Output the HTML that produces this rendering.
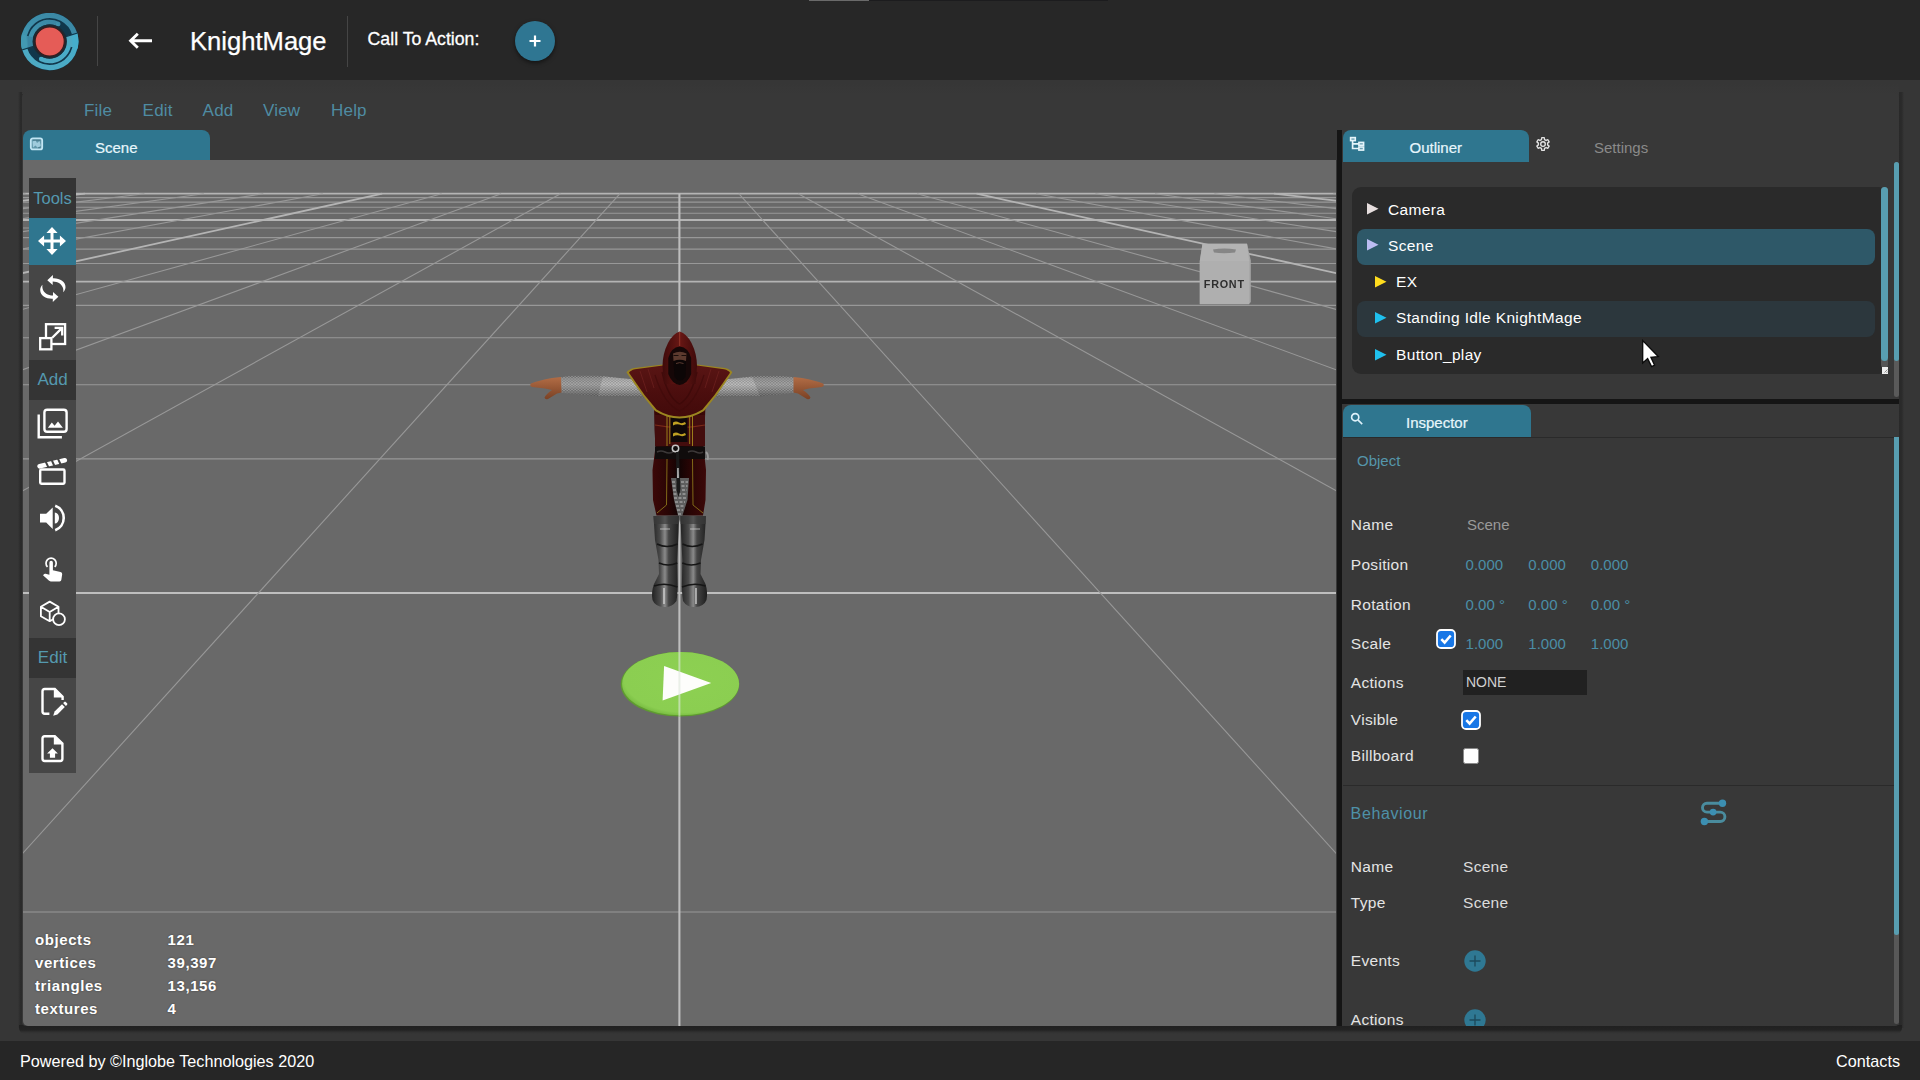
<!DOCTYPE html>
<html lang="en">
<head>
<meta charset="utf-8">
<title>KnightMage - Editor</title>
<style>
*{box-sizing:border-box;margin:0;padding:0}
html,body{width:1920px;height:1080px;overflow:hidden}
body{background:#363636;font-family:"Liberation Sans",sans-serif;color:#fff;position:relative}
.abs{position:absolute}
#hdr{left:0;top:0;width:1920px;height:80px;background:#272727}
#ftr{left:0;top:1041px;width:1920px;height:39px;background:#262626;font-size:16.200px;color:#fff}
#panel{left:22px;top:93px;width:1877px;height:933px;background:#383838;border-radius:4px;box-shadow:none}
.menu{top:100.700px;height:20px;font-size:17px;line-height:20px;color:#4f8ca3;letter-spacing:.2px}
.tab{background:#2f768f;border-radius:8px 8px 0 0;color:#e8f6fc;font-size:15px;text-align:center}
#vp{left:23px;top:160px;width:1313px;height:866px;background:#696969;overflow:hidden;border-radius:0 0 0 5px}
#tools{left:6px;top:18px;width:47px;height:594.600px;background:#464646}
.tl{left:0;width:47px;background:#343434;color:#5499af;font-size:17px;text-align:center}
.lbl{font-size:15.5px;color:#e4e4e4;letter-spacing:.3px;white-space:nowrap;line-height:18px}
.val{font-size:15px;color:#4b8ea6;white-space:nowrap;line-height:18px}
.row{left:1357px;width:518px;height:35px;border-radius:8px}
.rt{font-size:15.5px;color:#fff;letter-spacing:.35px;white-space:nowrap;line-height:18px}
.st{font-size:15px;font-weight:bold;color:#fff;white-space:nowrap;line-height:18px;letter-spacing:.58px;text-shadow:0 0 2px rgba(0,0,0,.45)}
</style>
</head>
<body>
<!-- HEADER -->
<div id="hdr" class="abs">
  <div class="abs" style="left:809px;top:0;width:60px;height:1px;background:#6a6a6a"></div>
  <div class="abs" style="left:869px;top:0;width:239px;height:1px;background:#1c1c1e"></div>
  <svg class="abs" style="left:21px;top:12.5px" width="58" height="58" viewBox="0 0 58 58"><defs><linearGradient id="lg1" x1="0" y1="1" x2="1" y2="0"><stop offset="0" stop-color="#4299b3"/><stop offset="1" stop-color="#3a85a2"/></linearGradient><linearGradient id="lg2" x1="0" y1="1" x2="1" y2="0"><stop offset="0" stop-color="#4fa9c2"/><stop offset="1" stop-color="#45aecb"/></linearGradient></defs><circle cx="28.7" cy="28.5" r="28.9" fill="#11374b"/><path d="M53.66 20.87A26.1 26.1 0 0 0 3.74 36.13" stroke="url(#lg1)" stroke-width="5.2" fill="none"/><path d="M37.25 10.97A19.5 19.5 0 0 0 10.05 34.20" stroke="url(#lg1)" stroke-width="4.6" fill="none"/><circle cx="37.25" cy="10.97" r="2.3" fill="url(#lg1)"/><path d="M6.48 22.96A22.9 22.9 0 0 0 6.80 35.20" stroke="url(#lg1)" stroke-width="11.6" fill="none"/><path d="M3.74 36.13A26.1 26.1 0 0 0 53.66 20.87" stroke="url(#lg2)" stroke-width="5.2" fill="none"/><path d="M20.15 46.03A19.5 19.5 0 0 0 47.35 22.80" stroke="url(#lg2)" stroke-width="4.6" fill="none"/><circle cx="20.15" cy="46.03" r="2.3" fill="url(#lg2)"/><path d="M50.92 34.04A22.9 22.9 0 0 0 50.60 21.80" stroke="url(#lg2)" stroke-width="11.6" fill="none"/><path d="M0.78 37.04L13.40 33.18M44.00 23.82L56.62 19.96" stroke="#11374b" stroke-width="1.2"/><circle cx="28.7" cy="28.5" r="17.1" fill="#1c2a33"/><circle cx="28.7" cy="28.5" r="14.6" fill="#e55c57" stroke="#3a1c1e" stroke-width="1.2"/></svg>
  <div class="abs" style="left:97px;top:16px;width:1px;height:50px;background:#454545"></div>
  <svg class="abs" style="left:126px;top:28px" width="30" height="26" viewBox="0 0 30 26"><path d="M26 12.800H5M11.800 5.800L4.600 12.800l7.200 7" fill="none" stroke="#fff" stroke-width="2.900"/></svg>
  <div class="abs" style="left:190px;top:25px;font-size:25.6px;line-height:32px;color:#fff;white-space:nowrap;-webkit-text-stroke:.25px #fff">KnightMage</div>
  <div class="abs" style="left:347px;top:16px;width:1px;height:51px;background:#454545"></div>
  <div class="abs" style="left:367.600px;top:27.800px;font-size:17.700px;line-height:22px;color:#fff;white-space:nowrap;-webkit-text-stroke:.3px #fff">Call To Action:</div>
  <div class="abs" style="left:515px;top:21px;width:40px;height:40px;border-radius:50%;background:#2f7692;box-shadow:0 2px 4px rgba(0,0,0,.5)"></div>
  <svg class="abs" style="left:527px;top:33px" width="16" height="16" viewBox="0 0 16 16"><path d="M8 2.5v11M2.5 8h11" stroke="#fff" stroke-width="2.2" fill="none"/></svg>
</div>

<!-- EDITOR PANEL -->
<div class="abs" style="left:17.500px;top:92px;width:5px;height:936px;background:linear-gradient(to right,rgba(42,42,42,0),#2b2b2b 45%,#292929)"></div>
<div class="abs" style="left:1899px;top:92px;width:4.500px;height:936px;background:linear-gradient(to left,rgba(42,42,42,0),#2b2b2b 45%,#292929)"></div>
<div class="abs" style="left:19px;top:1025px;width:1883px;height:9px;border-radius:0 0 6px 6px;background:linear-gradient(to bottom,#202020,#232323 55%,rgba(46,46,46,.6) 80%,rgba(54,54,54,0))"></div>
<div class="abs" style="left:22px;top:84px;width:1877px;height:10px;background:linear-gradient(to bottom,rgba(56,56,56,0),#383838)"></div>
<div id="panel" class="abs"></div>
<div class="abs menu" style="left:84px">File</div>
<div class="abs menu" style="left:142.600px">Edit</div>
<div class="abs menu" style="left:202.600px">Add</div>
<div class="abs menu" style="left:263px">View</div>
<div class="abs menu" style="left:331px">Help</div>

<!-- scene tab -->
<div class="abs tab" style="left:23px;top:130px;width:187px;height:30px;line-height:34px"><span style="position:absolute;left:72px;top:.7px;-webkit-text-stroke:.2px #e8f6fc">Scene</span></div>
<svg class="abs" style="left:29px;top:136px" width="16" height="16" viewBox="0 0 16 16"><rect x="1.800" y="2.300" width="11.400" height="11.100" rx="2" fill="#5f97aa" stroke="#c2e6f4" stroke-width="1.800"/><path d="M3.500 5.500L6.500 4.200L8 7L10.500 5L11.800 9.500L9 12L6.500 9.500L4 11.500Z" fill="#b4dcec" opacity=".75"/><path d="M4.200 4.200h7.200M8.800 11.700h2.600" stroke="#3f6f80" stroke-width="1" opacity=".8"/></svg>


<!-- VIEWPORT -->
<div id="vp" class="abs">
<svg class="abs" style="left:0;top:0" width="1313" height="866" viewBox="0 0 1313 866"><style>.a{stroke:#989898;stroke-width:1.1;fill:none}.b{stroke:#b4b4b4;stroke-width:1.8;fill:none}.c{stroke:#bebebe;stroke-width:2.1;fill:none}</style><path class="b" d="M-5.0 33.7L1318.0 33.7"/><path class="a" d="M-5.0 37.6L1318.0 37.6"/><path class="a" d="M-5.0 42.1L1318.0 42.1"/><path class="a" d="M-5.0 47.3L1318.0 47.3"/><path class="a" d="M-5.0 53.2L1318.0 53.2"/><path class="b" d="M-5.0 60.0L1318.0 60.0"/><path class="a" d="M-5.0 68.0L1318.0 68.0"/><path class="a" d="M-5.0 77.6L1318.0 77.6"/><path class="a" d="M-5.0 89.1L1318.0 89.1"/><path class="a" d="M-5.0 103.5L1318.0 103.5"/><path class="b" d="M-5.0 121.6L1318.0 121.6"/><path class="a" d="M-5.0 145.4L1318.0 145.4"/><path class="a" d="M-5.0 177.8L1318.0 177.8"/><path class="a" d="M-5.0 224.8L1318.0 224.8"/><path class="a" d="M-5.0 298.9L1318.0 298.9"/><path class="c" d="M-5.0 433.0L1318.0 433.0"/><path class="a" d="M-5.0 752.0L1318.0 752.0"/><path class="b" d="M-235.3 33.7L-11607.2 871.0"/><path class="a" d="M-175.9 33.7L-10789.7 871.0"/><path class="a" d="M-116.4 33.7L-9972.1 871.0"/><path class="a" d="M-57.0 33.7L-9154.5 871.0"/><path class="a" d="M2.5 33.7L-8336.9 871.0"/><path class="b" d="M61.9 33.7L-7519.4 871.0"/><path class="a" d="M121.4 33.7L-6701.8 871.0"/><path class="a" d="M180.8 33.7L-5884.2 871.0"/><path class="a" d="M240.3 33.7L-5066.6 871.0"/><path class="a" d="M299.7 33.7L-4249.1 871.0"/><path class="b" d="M359.2 33.7L-3431.5 871.0"/><path class="a" d="M418.6 33.7L-2613.9 871.0"/><path class="a" d="M478.1 33.7L-1796.3 871.0"/><path class="a" d="M537.5 33.7L-978.8 871.0"/><path class="a" d="M597.0 33.7L-161.2 871.0"/><path class="c" d="M656.4 33.7L656.4 871.0"/><path class="a" d="M715.8 33.7L1474.0 871.0"/><path class="a" d="M775.3 33.7L2291.6 871.0"/><path class="a" d="M834.7 33.7L3109.1 871.0"/><path class="a" d="M894.2 33.7L3926.7 871.0"/><path class="b" d="M953.6 33.7L4744.3 871.0"/><path class="a" d="M1013.1 33.7L5561.9 871.0"/><path class="a" d="M1072.5 33.7L6379.4 871.0"/><path class="a" d="M1132.0 33.7L7197.0 871.0"/><path class="a" d="M1191.4 33.7L8014.6 871.0"/><path class="b" d="M1250.9 33.7L8832.2 871.0"/><path class="a" d="M1310.3 33.7L9649.7 871.0"/><path class="a" d="M1369.8 33.7L10467.3 871.0"/><path class="a" d="M1429.2 33.7L11284.9 871.0"/><path class="a" d="M1488.7 33.7L12102.5 871.0"/><path class="b" d="M1548.1 33.7L12920.0 871.0"/></svg>
<svg class="abs" style="left:497px;top:165px" width="320" height="290" viewBox="520 325 320 290">
<defs>
<linearGradient id="gm" x1="0" y1="0" x2="0" y2="1"><stop offset="0" stop-color="#707070"/><stop offset=".14" stop-color="#a2a2a2"/><stop offset=".42" stop-color="#b6b6b6"/><stop offset=".72" stop-color="#8a8a8a"/><stop offset="1" stop-color="#565656"/></linearGradient>
<pattern id="pm" width="3.2" height="2.6" patternUnits="userSpaceOnUse"><circle cx=".8" cy=".7" r=".7" fill="#e8e8e8"/><circle cx="2.4" cy="2" r=".7" fill="#e4e4e4"/><circle cx="2.4" cy=".7" r=".7" fill="#4c4c4c"/><circle cx=".8" cy="2" r=".7" fill="#505050"/></pattern>
<linearGradient id="gsk" x1="0" y1="0" x2="0" y2="1"><stop offset="0" stop-color="#b26d46"/><stop offset="1" stop-color="#7a4124"/></linearGradient>
<linearGradient id="gco" x1="0" y1="0" x2="0" y2="1"><stop offset="0" stop-color="#591514"/><stop offset=".5" stop-color="#4c0e0e"/><stop offset="1" stop-color="#420a0a"/></linearGradient>
<linearGradient id="gho" x1="0" y1="0" x2="1" y2="0"><stop offset="0" stop-color="#3e0a0a"/><stop offset=".5" stop-color="#681714"/><stop offset="1" stop-color="#3e0a0a"/></linearGradient>
<linearGradient id="gbt" x1="0" y1="0" x2="1" y2="0"><stop offset="0" stop-color="#222"/><stop offset=".3" stop-color="#4a4a4a"/><stop offset=".48" stop-color="#8a8a8a"/><stop offset=".62" stop-color="#454545"/><stop offset="1" stop-color="#1e1e1e"/></linearGradient>
<linearGradient id="gsk2" x1="0" y1="0" x2="1" y2="0"><stop offset="0" stop-color="#3c0808"/><stop offset=".28" stop-color="#2a0505"/><stop offset=".5" stop-color="#120404"/><stop offset=".72" stop-color="#2a0505"/><stop offset="1" stop-color="#3c0808"/></linearGradient>
</defs>
<!-- arms -->
<path d="M560.500 377.200Q585 373.500 603 376.300Q622 378.500 640 380L646 397.500Q620 397 598 396.300Q578 394.500 560.800 392.700Z" fill="url(#gm)"/>
<path d="M560.500 377.200Q585 373.500 603 376.300Q622 378.500 640 380L646 397.500Q620 397 598 396.300Q578 394.500 560.800 392.700Z" fill="url(#pm)" opacity=".42"/>
<path d="M794 377.200Q770 374 752 376.500Q734 378.500 718 380L712 397.500Q738 397 760 396.300Q780 394.500 794 392.700Z" fill="url(#gm)"/>
<path d="M794 377.200Q770 374 752 376.500Q734 378.500 718 380L712 397.500Q738 397 760 396.300Q780 394.500 794 392.700Z" fill="url(#pm)" opacity=".42"/>
<path d="M560.500 377.200Q585 373.500 603 376.300L598 396.300Q578 394.500 560.800 392.700Z" fill="#000" opacity=".12"/><path d="M794 377.200Q770 374 752 376.500L760 396.300Q780 394.500 794 392.700Z" fill="#000" opacity=".12"/>
<!-- hands -->
<path d="M561 377L552 378Q538 380.500 531 383.500Q529 385.500 532 387L545 388.500L552 390Q546 394 544.500 397.500Q545 400 548 399Q553 396 557 393.500L561.500 392.500Z" fill="url(#gsk)"/>
<path d="M793.500 377L802 378Q816 380.500 823 383.500Q825 385.500 822 387L809 388.500L803 390Q809 394 810.500 397.500Q810 400 807 399Q802 396 798 393.500L793.500 392.500Z" fill="url(#gsk)"/>
<!-- torso -->
<path d="M654 405L705.500 405L704.500 430L703.500 447L706 470L705.500 500L703 515.500L656.500 515.500L653 500L652.500 470L655.500 447L654.500 430Z" fill="url(#gsk2)"/>
<path d="M655 415H705V446H655Z" fill="#430d0d"/>
<path d="M655 425Q680 430 705 425" fill="none" stroke="#7a2a18" stroke-width="1.200"/>
<path d="M670.500 415H687.500V442H670.500Z" fill="#0e0808"/>
<path d="M667 412V446M692.500 412V446M669.800 414V444M689.700 414V444" stroke="#a58a1c" stroke-width=".9" fill="none"/>
<path d="M673 422.500q3-2 6 0q3 1.500 6-.5l1 2q-3 2-6.500 .5q-3-1-6.500 1zM673 433.500q3-2 6 0q3 1.500 6-.5l1 2q-3 2-6.500 .5q-3-1-6.500 1z" fill="#bfa022"/>
<!-- belt -->
<path d="M655 446.500H705V459H655Z" fill="#100c0c"/>
<path d="M657 452q4-2 8 0t8 0M688 452q4-2 8 0t7 0" stroke="#3c3838" stroke-width="1.600" fill="none"/>
<circle cx="675.500" cy="448.500" r="3.200" fill="none" stroke="#c4c4c4" stroke-width="1.500"/>
<path d="M706 452q3 3 1.500 8" stroke="#9a9a9a" stroke-width="1.800" fill="none"/>
<!-- skirt details -->
<path d="M667 459L666.500 505L657 513M692.500 459L693 505L703 513" stroke="#8a741a" stroke-width=".9" fill="none"/>
<path d="M671 478L689 478L687.500 500L680 523L674 500Z" fill="#5e5e5e"/>
<path d="M672 482h16M672.500 486h15M673 490h14M673.500 494h13M674 498h12M675 502h10M676 506h8M677 510h6M678 514h4" stroke="#bdbdbd" stroke-width="1" stroke-dasharray="3 1.500"/>
<path d="M676 452L679 452L680.500 490L678.500 497L676.500 490Z" fill="#1a1a1a"/>
<path d="M677.300 468L678.600 468L678.800 478L677.200 478Z" fill="#d0d0d0"/>
<!-- cowl -->
<path d="M626.500 372.500Q628 369.500 634 368L663 364.500L697 364.500L725 368Q731 369.500 732.300 372.500L716 396L704 411Q692 418.500 679.500 418.500Q667 418.500 655 411L643 396Z" fill="#9c8620"/>
<path d="M629 372.800Q630.500 370.300 635 369.300L663 365.500L697 365.500L724 369.300Q728.500 370.300 730 372.800L714.500 395L702.500 409.500Q691 416.500 679.500 416.500Q668 416.500 656.500 409.500L644.500 395Z" fill="url(#gco)"/>
<path d="M662 372Q668 398 679.500 404Q691 398 697 372" fill="none" stroke="#3c0909" stroke-width="1.400" opacity=".8"/>
<path d="M655 375Q664 404 679.500 411Q695 404 704 375" fill="none" stroke="#3e0a0a" stroke-width="1.200" opacity=".7"/>
<path d="M640 371L647 392M719 371L712 392M648 369L654 388M711 369L705 388" stroke="#6f2220" stroke-width="1" opacity=".7"/>
<!-- hood -->
<path d="M679.700 331.500Q673 333.500 668 343Q662.500 354 662.500 366L664 384L695.500 384L697 366Q697 354 691.500 343Q686.500 333.500 679.700 331.500Z" fill="url(#gho)"/>
<path d="M679.700 332V346" stroke="#a04030" stroke-width=".8"/>
<!-- face opening -->
<path d="M679.700 346.500Q671 347.500 668.300 358L668.300 374Q672 384 679.700 385Q687.500 384 691.200 374L691.200 358Q688.500 347.500 679.700 346.500Z" fill="#150707"/>
<path d="M673 353.500Q679.700 350 686.500 353.500L686 361L673.500 361Z" fill="#5c3a2e"/>
<path d="M673.500 355.500h5M681.500 355.500h5" stroke="#1a0d0a" stroke-width="1.200"/>
<path d="M673.500 361Q679.700 358.500 686 361L685.500 377Q680 384 674.500 377Z" fill="#0c0606"/>
<path d="M676 363.500Q679.700 361.800 683.500 363.500" stroke="#5a3a30" stroke-width="1" fill="none"/>
<!-- boots -->
<path d="M653.500 516L679 516L678.500 532L677.200 560L677.500 578Q678 592 676.500 601Q672 607.500 664 607Q655 606.500 652.500 600Q651 592 654 584L659 574L658.500 560L655 540Z" fill="url(#gbt)"/>
<path d="M680.500 516L706 516L704.500 540L701 560L700.500 574L705.500 584Q708 592 706.500 600Q704 606.500 695 607Q687 607.500 683 601Q681.500 592 682 578L682.300 560L681 532Z" fill="url(#gbt)"/>
<path d="M653.500 516H679V524H654ZM680.500 516H706V524H680.500Z" fill="#3a3a3a" opacity=".7"/>
<path d="M657 544Q667 549 677.500 544M682.500 544Q692 549 702.500 544M659 563Q668 567 677.300 563M682.300 563Q691 567 700.500 563M654 586Q665 582 677.500 587M682 587Q694 582 705.500 586" stroke="#161616" stroke-width="1.600" fill="none"/>
<path d="M664 588V604M696 588V604" stroke="#e0e0e0" stroke-width="1.400" opacity=".85"/>
<path d="M660 529h10M690 529h10" stroke="#c8c8c8" stroke-width="1.200" opacity=".8"/>
</svg>

<svg class="abs" style="left:587px;top:480px" width="140" height="90" viewBox="610 640 140 90">
<defs><radialGradient id="gpl" cx=".55" cy=".42" r=".62"><stop offset="0" stop-color="#8dd052"/><stop offset=".86" stop-color="#8bce51"/><stop offset=".96" stop-color="#79bd42"/><stop offset="1" stop-color="#62a230"/></radialGradient><clipPath id="cpl"><ellipse cx="680" cy="684.300" rx="59.300" ry="32.300"/></clipPath></defs>
<ellipse cx="680" cy="684.300" rx="59.300" ry="32.300" fill="#5f9c30"/>
<ellipse cx="680.600" cy="683.700" rx="58.500" ry="31.600" fill="url(#gpl)"/>
<path d="M664.100 666L711.200 683L662.600 700.600Z" fill="#fdfdfb"/>
<path d="M679.400 640V730" stroke="#dfe8dc" stroke-width="2" opacity=".62" clip-path="url(#cpl)"/>
</svg>

<svg class="abs" style="left:1167px;top:75px" width="80" height="80" viewBox="1190 235 80 80">
<defs><filter id="bl"><feGaussianBlur stdDeviation=".45"/></filter><filter id="bl2"><feGaussianBlur stdDeviation=".7"/></filter></defs>
<g filter="url(#bl)">
<path d="M1202.500 243.800H1247L1250.800 260.500L1250.800 302L1249 304H1199.800V261Z" fill="#a6a6a6"/>
<path d="M1202.500 243.800H1247L1249.200 261H1199.800Z" fill="#b3b3b3"/>
<path d="M1199.800 261H1249.200V304.200H1199.800Z" fill="#afafaf"/>
</g>
<path d="M1213 249.500Q1224 247.500 1236 249.500L1235 252.500Q1224 254 1214 252.500Z" fill="#777" filter="url(#bl2)" opacity=".75"/>
<text x="1224.300" y="287.600" text-anchor="middle" font-family="Liberation Sans, sans-serif" font-weight="bold" font-size="10.800" letter-spacing=".75" fill="#2e2e2e" filter="url(#bl)">FRONT</text>
</svg>

  <div id="tools" class="abs">
    <div class="abs tl" style="top:0;height:40px;line-height:41px;font-size:16.500px">Tools</div>
    <div class="abs" style="left:0;top:40px;width:47px;height:47px;background:#2f768f"></div>
    <div class="abs tl" style="top:182px;height:39.500px;line-height:40px">Add</div>
    <div class="abs tl" style="top:460px;height:40px;line-height:40px">Edit</div>
<svg class="abs" style="left:9.200px;top:49.400px" width="28" height="28" viewBox="0 0 28 28"><path fill="#fff" d="M14 0L19.600 6.100H15.500V12.500H21.900V8.400L28 14L21.900 19.600V15.500H15.500V21.900H19.600L14 28L8.400 21.900H12.500V15.500H6.100V19.600L0 14L6.100 8.400V12.500H12.500V6.100H8.400Z"/></svg>
<svg class="abs" style="left:10.600px;top:97px" width="28" height="28" viewBox="0 0 28 28"><g fill="#fff"><path d="M7.300 5.300L12.900 0.100L12.900 3.300C19.600 3 25.700 6.500 25.500 12.300C25.400 14.500 24.500 16 23.200 17.300C23.500 15.600 23.400 14.200 23 13C21.800 9 18 6.500 12.700 6.400L12.700 9.900Z"/><path d="M7.300 5.300L12.900 0.100L12.900 3.300C19.600 3 25.700 6.500 25.500 12.300C25.400 14.500 24.500 16 23.200 17.300C23.500 15.600 23.400 14.200 23 13C21.800 9 18 6.500 12.700 6.400L12.700 9.900Z" transform="rotate(180 12.850 13.500)"/></g></svg>
<svg class="abs" style="left:10px;top:144.600px" width="29" height="29" viewBox="0 0 29 29"><g fill="none" stroke="#fff" stroke-width="2.300"><rect x="7" y="1.200" width="19.100" height="19.800"/><path d="M13.200 14.800L22.400 5.600M15.600 4.800H23.200V12.400"/><rect x="1.200" y="15.100" width="11.200" height="11.200" fill="#444"/></g></svg>
<svg class="abs" style="left:8px;top:230px" width="32" height="32" viewBox="0 0 32 32"><g fill="none" stroke="#fff" stroke-width="2.400"><path d="M1.700 6.500V29.200H24.900"/><rect x="7.400" y="1.700" width="22.200" height="22" rx="2.800"/></g><path fill="#fff" d="M10.900 19.700L14.800 14.600L17.600 17.700L21 13.400L25.900 19.700Z"/></svg>
<svg class="abs" style="left:8px;top:277px" width="32" height="32" viewBox="0 0 32 32"><rect x="3.200" y="14.500" width="24.300" height="14.300" rx="1.200" fill="none" stroke="#fff" stroke-width="2.400"/><path d="M2.600 11.300L27.800 5.300" stroke="#fff" stroke-width="4.600" stroke-linecap="round"/><path d="M8.600 6.300L11.400 12.400M14.600 4.900L17.400 11M20.800 3.400L23.600 9.500" stroke="#444" stroke-width="2"/></svg>
<svg class="abs" style="left:9px;top:326px" width="30" height="30" viewBox="0 0 30 30"><path fill="#fff" d="M2 9.700H8.200L14.700 3.500V25L8.200 18.500H2Z"/><path fill="#fff" d="M16.800 8.400A4.200 5.600 0 0 1 16.800 19.600Z"/><path d="M17.200 1.800A13 13 0 0 1 17.200 26.200" fill="none" stroke="#fff" stroke-width="2.600"/></svg>
<svg class="abs" style="left:9px;top:377px" width="30" height="30" viewBox="0 0 30 30"><path d="M9.500 11.800A5.100 5.100 0 1 1 16.700 11.800" fill="none" stroke="#fff" stroke-width="1.700"/><path fill="#fff" d="M11.400 7.600a1.750 1.750 0 0 1 3.500 0V15.300L22.500 16.900Q24.400 17.400 24.200 19.200L23.300 25Q23 26.400 21.600 26.400H12.700Q11.600 26.400 10.800 25.600L5 20.200L6.200 19Q6.800 18.500 7.600 18.700L11.400 19.700Z"/></svg>
<svg class="abs" style="left:9px;top:421px" width="32" height="32" viewBox="0 0 32 32"><g fill="none" stroke="#fff" stroke-width="1.800" stroke-linejoin="round"><path d="M11.700 2.600L20.500 7.700V17.300L11.700 22.200L2.900 17.300V7.700ZM2.900 7.700L11.700 12.900L20.500 7.700M11.700 12.900V22.200"/><circle cx="21" cy="20.200" r="5.900" fill="#444"/></g></svg>
<svg class="abs" style="left:9px;top:508px" width="30" height="32" viewBox="0 0 30 32"><path d="M11.400 27.700H6.700Q4.500 27.700 4.500 25.500V5.200Q4.500 3 6.700 3H16.800L24.600 10.800V14" fill="none" stroke="#fff" stroke-width="2.400"/><path fill="#fff" d="M15.800 2.400L25.400 11.600H15.800Z"/><path d="M15.200 29.800L16.600 25.600L24 18.200L26.800 21L19.400 28.400Z" fill="#fff"/><path d="M25.100 17.100L26.300 15.900Q27 15.300 27.700 15.900L29.100 17.300Q29.700 18 29.100 18.700L27.900 19.900Z" fill="#fff"/></svg>
<svg class="abs" style="left:9px;top:555px" width="30" height="32" viewBox="0 0 30 32"><path d="M6.700 3.200H16.800L24.400 10.600V25.800Q24.400 28 22.200 28H6.700Q4.500 28 4.500 25.800V5.400Q4.500 3.200 6.700 3.200Z" fill="none" stroke="#fff" stroke-width="2.400"/><path fill="#fff" d="M15.800 2.600L25 11.400H15.800Z"/><path fill="#fff" d="M14.500 15.200L19.900 20.600H17.100V24.700H11.900V20.600H9.100Z"/></svg>

  </div>
  <div class="abs st" style="left:12px;top:771px">objects</div><div class="abs st" style="left:144.600px;top:771px">121</div>
  <div class="abs st" style="left:12px;top:794px">vertices</div><div class="abs st" style="left:144.600px;top:794px">39,397</div>
  <div class="abs st" style="left:12px;top:817px">triangles</div><div class="abs st" style="left:144.600px;top:817px">13,156</div>
  <div class="abs st" style="left:12px;top:840px">textures</div><div class="abs st" style="left:144.600px;top:840px">4</div>
</div>

<!-- dividers -->
<div class="abs" style="left:1337px;top:130px;width:5px;height:896px;background:#151515"></div>
<div class="abs" style="left:1342px;top:399px;width:1557px;height:5px;background:#151515;width:557px"></div>

<!-- OUTLINER -->
<div class="abs tab" style="left:1343px;top:130px;width:186px;height:32px;line-height:35px"><span style="position:absolute;left:66.500px;top:0;-webkit-text-stroke:.2px #e8f6fc">Outliner</span></div>
<svg class="abs" style="left:1349px;top:136px" width="16" height="16" viewBox="0 0 16 16" fill="rgba(223,241,248,.35)" stroke="#e4f4fa" stroke-width="1.600"><rect x="1.600" y="1.600" width="4.700" height="3"/><rect x="9.900" y="6.400" width="4.700" height="2.900"/><rect x="9.900" y="11" width="4.700" height="3.100"/><path d="M3.600 4.600V12.500H9.900M3.600 7.800H9.900" fill="none" stroke-width="1.700"/></svg>
<svg class="abs" style="left:1534.600px;top:136.100px" width="16" height="16" viewBox="0 0 16 16" fill="none" stroke="#e2e2e2" stroke-width="1.350" stroke-linejoin="round"><path d="M9.53 3.56L9.24 1.62L6.76 1.62L6.47 3.56L4.92 4.45L3.09 3.74L1.85 5.88L3.39 7.10L3.39 8.90L1.85 10.12L3.09 12.26L4.92 11.55L6.47 12.44L6.76 14.38L9.24 14.38L9.53 12.44L11.08 11.55L12.91 12.26L14.15 10.12L12.61 8.90L12.61 7.10L14.15 5.88L12.91 3.74L11.08 4.45Z"/><circle cx="8" cy="8" r="2.300"/></svg>
<div class="abs" style="left:1594px;top:139px;font-size:15px;line-height:18px;color:#8a8a8a;white-space:nowrap">Settings</div>
<!-- outer scrollbar -->
<div class="abs" style="left:1894px;top:162px;width:5px;height:235px;background:#5a5a5a;border-radius:3px"></div>
<div class="abs" style="left:1894px;top:162px;width:5px;height:199px;background:#589eb1;border-radius:3px"></div>
<!-- list -->
<div class="abs" style="left:1352px;top:187px;width:536px;height:187px;background:#2a2a2a;border-radius:9px"></div>
<div class="abs row" style="top:229.200px;height:35.500px;background:#2e5868"></div>
<div class="abs row" style="top:301.300px;height:35.300px;background:#2c373d"></div>
<div class="abs" style="left:1881px;top:187px;width:7px;height:181px;background:#555;border-radius:4px"></div>
<div class="abs" style="left:1881px;top:187px;width:7px;height:174px;background:#589eb1;border-radius:4px"></div>
<div class="abs" style="left:1881.500px;top:367.300px;width:6.400px;height:6.400px;background:#eee"></div><svg class="abs" style="left:1881.500px;top:367.300px" width="7" height="7"><path d="M2.500 5.500L5.500 2.500M4.500 5.800L5.800 4.500" stroke="#666" stroke-width=".7"/></svg>
<svg class="abs" style="left:1367px;top:203px" width="12" height="12"><path d="M0 0L11.500 5.700L0 11.400z" fill="#e6dede"/></svg>
<div class="abs rt" style="left:1388px;top:200.600px">Camera</div>
<svg class="abs" style="left:1367px;top:239px" width="12" height="12"><path d="M0 0L11.500 5.700L0 11.400z" fill="#bcbcf2"/></svg>
<div class="abs rt" style="left:1388px;top:236.600px">Scene</div>
<svg class="abs" style="left:1374.600px;top:275.500px" width="12" height="12"><path d="M0 0L11.500 5.700L0 11.400z" fill="#ffdc1e"/></svg>
<div class="abs rt" style="left:1396px;top:272.600px">EX</div>
<svg class="abs" style="left:1374.600px;top:312px" width="12" height="12"><path d="M0 0L11.500 5.700L0 11.400z" fill="#1fc0ee"/></svg>
<div class="abs rt" style="left:1396px;top:308.800px">Standing Idle KnightMage</div>
<svg class="abs" style="left:1374.600px;top:348.500px" width="12" height="12"><path d="M0 0L11.500 5.700L0 11.400z" fill="#1fc0ee"/></svg>
<div class="abs rt" style="left:1396px;top:346.100px">Button_play</div>

<!-- INSPECTOR -->
<div class="abs tab" style="left:1343px;top:405px;width:188px;height:32px;line-height:35px"><span style="position:absolute;left:63px;top:0;-webkit-text-stroke:.2px #e8f6fc">Inspector</span></div>
<svg class="abs" style="left:1350.300px;top:411.800px" width="14" height="14" viewBox="0 0 14 14" fill="none" stroke="#dcf0f9" stroke-width="1.650"><circle cx="5.200" cy="5.200" r="3.600"/><path d="M7.900 7.900l4.300 4.300"/></svg>
<div class="abs" style="left:1343px;top:437px;width:551px;height:1px;background:#2a2a2a"></div>
<div class="abs" style="left:1894px;top:437px;width:5px;height:587px;background:#585858;border-radius:3px"></div>
<div class="abs" style="left:1894px;top:437px;width:5px;height:498px;background:#589eb1;border-radius:0 0 3px 3px"></div>
<div class="abs" style="left:1357px;top:452px;font-size:15px;line-height:18px;color:#5596ab;white-space:nowrap">Object</div>

<div class="abs lbl" style="left:1350.800px;top:516px">Name</div>
<div class="abs" style="left:1467px;top:516px;font-size:15px;line-height:18px;color:#9a9a9a;white-space:nowrap">Scene</div>
<div class="abs lbl" style="left:1350.800px;top:556px">Position</div>
<div class="abs val" style="left:1465.600px;top:556px">0.000</div><div class="abs val" style="left:1528.300px;top:556px">0.000</div><div class="abs val" style="left:1590.800px;top:556px">0.000</div>
<div class="abs lbl" style="left:1350.800px;top:596px">Rotation</div>
<div class="abs val" style="left:1465.600px;top:596px">0.00 °</div><div class="abs val" style="left:1528.300px;top:596px">0.00 °</div><div class="abs val" style="left:1590.800px;top:596px">0.00 °</div>
<div class="abs lbl" style="left:1350.800px;top:635px">Scale</div>
<div class="abs val" style="left:1465.600px;top:635px">1.000</div><div class="abs val" style="left:1528.300px;top:635px">1.000</div><div class="abs val" style="left:1590.800px;top:635px">1.000</div>
<svg class="abs" style="left:1436px;top:629px" width="20" height="20" viewBox="0 0 20 20"><rect x="1" y="1" width="18" height="18" rx="4" fill="#1877e6" stroke="#fff" stroke-width="1.800"/><path d="M5.300 10.200l3.300 3.300 6.100-7" fill="none" stroke="#fff" stroke-width="2.600"/></svg>
<div class="abs lbl" style="left:1350.800px;top:674px">Actions</div>
<div class="abs" style="left:1463px;top:670px;width:124px;height:25px;background:#212121"></div>
<div class="abs" style="left:1466px;top:673px;font-size:14px;line-height:18px;color:#d0d0d0;white-space:nowrap">NONE</div>
<div class="abs lbl" style="left:1350.800px;top:711px">Visible</div>
<svg class="abs" style="left:1461px;top:710px" width="20" height="20" viewBox="0 0 20 20"><rect x="1" y="1" width="18" height="18" rx="4" fill="#1877e6" stroke="#fff" stroke-width="1.800"/><path d="M5.300 10.200l3.300 3.300 6.100-7" fill="none" stroke="#fff" stroke-width="2.600"/></svg>
<div class="abs lbl" style="left:1350.800px;top:747px">Billboard</div>
<div class="abs" style="left:1463px;top:748px;width:16px;height:16px;background:#fff;border-radius:2.500px;border:1px solid #8a8a8a"></div>
<div class="abs" style="left:1343px;top:785px;width:551px;height:1px;background:#2a2a2a"></div>

<div class="abs" style="left:1350.600px;top:803.500px;font-size:16px;letter-spacing:.62px;line-height:20px;color:#4e91a8;white-space:nowrap">Behaviour</div>
<svg class="abs" style="left:1698px;top:797px" width="31" height="31" viewBox="0 0 31 31"><path d="M24.500 6.300H8.900a4.400 4.400 0 0 0 0 8.800H22.200a4.700 4.700 0 0 1 0 9.400H6.400" fill="none" stroke="#4a8c9e" stroke-width="2.900"/><circle cx="24.500" cy="6.300" r="3.700" fill="#3c8fb2"/><circle cx="15.100" cy="15.100" r="3.400" fill="#3c8fb2"/><circle cx="6.400" cy="24.500" r="3.700" fill="#3c8fb2"/></svg>

<div class="abs lbl" style="left:1350.800px;top:858px">Name</div>
<div class="abs lbl" style="left:1463px;top:858px;color:#dcdcdc">Scene</div>
<div class="abs lbl" style="left:1350.800px;top:894px">Type</div>
<div class="abs lbl" style="left:1463px;top:894px;color:#dcdcdc">Scene</div>
<div class="abs lbl" style="left:1350.800px;top:952px">Events</div>
<svg class="abs" style="left:1464px;top:950px" width="22" height="22" viewBox="0 0 22 22"><circle cx="11" cy="11" r="10.700" fill="#2f7893"/><path d="M11 5.500v11M5.500 11h11" stroke="#1d4a5c" stroke-width="1.400"/></svg>
<div class="abs" style="left:1343px;top:1000px;width:551px;height:26px;overflow:hidden">
<div class="abs lbl" style="left:7.800px;top:11px">Actions</div>
<svg class="abs" style="left:121px;top:9px" width="22" height="22" viewBox="0 0 22 22"><circle cx="11" cy="11" r="10.700" fill="#2f7893"/><path d="M11 5.500v11M5.500 11h11" stroke="#1d4a5c" stroke-width="1.400"/></svg>
</div>


<!-- FOOTER -->
<div id="ftr" class="abs">
  <div class="abs" style="left:20px;top:10px;line-height:20px;white-space:nowrap">Powered by ©Inglobe Technologies 2020</div>
  <div class="abs" style="right:20px;top:10px;line-height:20px;white-space:nowrap">Contacts</div>
</div>
<svg class="abs" style="left:1640px;top:338px" width="22" height="32" viewBox="-2 -2 22 32"><path d="M0.700 0.500V23L5.600 18.600L9.600 26.600L12.600 25.200L8.900 17.300L16.200 16.600Z" fill="#fff" stroke="#0a0a0a" stroke-width="1.300" stroke-linejoin="miter"/></svg>

</body>
</html>
